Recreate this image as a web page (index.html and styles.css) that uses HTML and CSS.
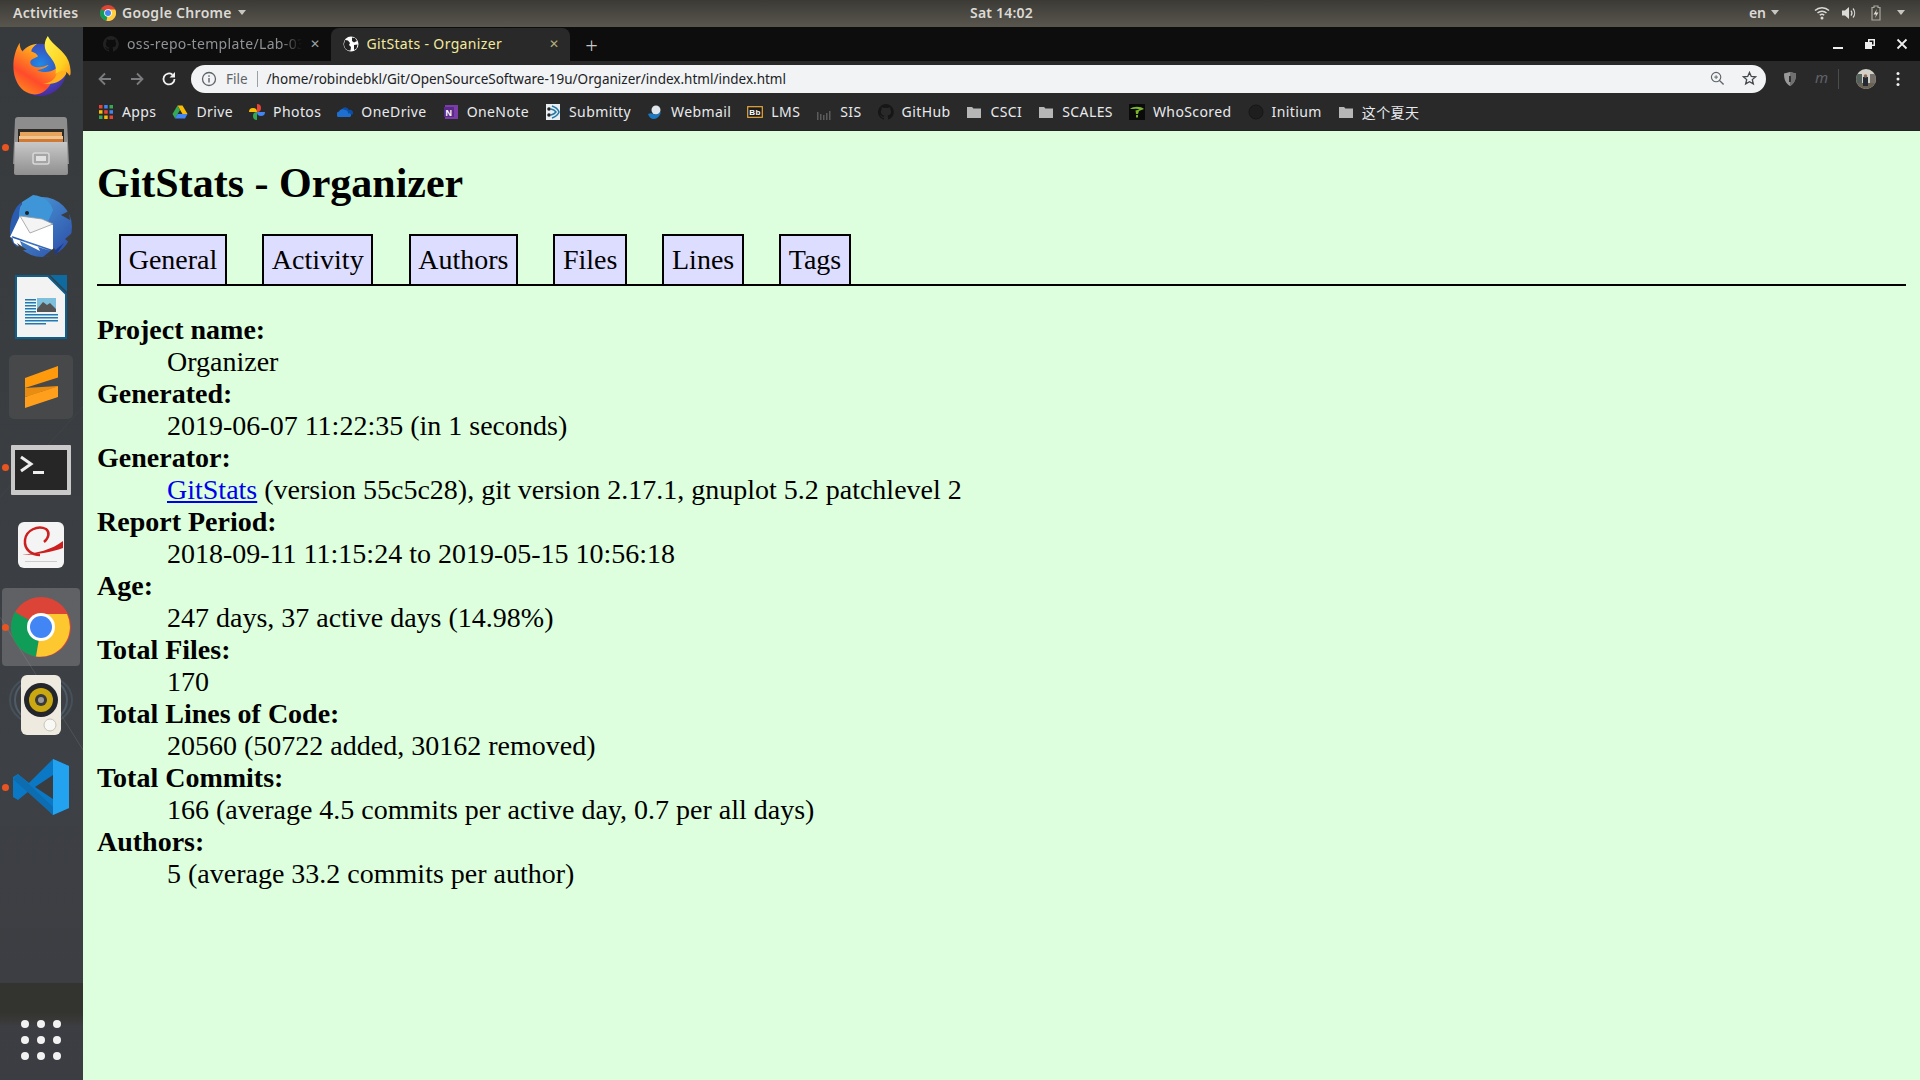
FILE: index.html
```html
<!DOCTYPE html>
<html lang="en">
<head>
<meta charset="utf-8">
<title>GitStats - Organizer</title>
<link rel="stylesheet" href="styles.css">
</head>
<body>
<header class="topbar">
  <div class="top-left">
    <span class="activities">Activities</span>
    <svg class="top-chrome" viewBox="0 0 16 16"><circle cx="8" cy="8" r="8" fill="#db4437"/><path d="M8 8 1.1 4 0 8a8 8 0 0 0 6.5 7.9z" fill="#0f9d58"/><path d="M8 4.5h7.2A8 8 0 0 1 6.5 15.9L8 8z" fill="#ffcd40"/><circle cx="8" cy="8" r="3.8" fill="#fff"/><circle cx="8" cy="8" r="3" fill="#4285f4"/></svg>
    <span class="appname">Google Chrome</span>
    <span class="caret"></span>
  </div>
  <div class="clock">Sat 14:02</div>
  <div class="top-right">
    <span class="lang">en</span>
    <span class="caret"></span>
    <svg class="tray tray-wifi" viewBox="0 0 16 16"><path d="M1 5.5a10 10 0 0 1 14 0M3.5 8a6.5 6.5 0 0 1 9 0M5.8 10.3a3.2 3.2 0 0 1 4.4 0" fill="none" stroke="#dcdad5" stroke-width="1.5"/><circle cx="8" cy="13" r="1.5" fill="#dcdad5"/></svg>
    <svg class="tray tray-vol" viewBox="0 0 16 16"><path d="M1 5.5h3L8 2v12l-4-3.500H1z" fill="#dcdad5"/><path d="M10 5.500a4 4 0 0 1 0 5M12 3.500a7 7 0 0 1 0 9" fill="none" stroke="#dcdad5" stroke-width="1.200"/></svg>
    <svg class="tray tray-bat" viewBox="0 0 16 16"><path d="M6 1h4v1.500h2V15H4V2.500h2z" fill="none" stroke="#aaa89f" stroke-width="1.200"/><path d="M9 4 5.500 9.500H8L7 13l3.500-5.500H8z" fill="#dcdad5"/></svg>
    <span class="caret"></span>
  </div>
</header>

<div class="desktop">
  <nav class="dock">
    <svg class="dock-wall" viewBox="0 0 83 1053"><path d="M0 590 83 723" stroke="#fff" stroke-opacity=".1" fill="none"/><path d="M0 470 83 380" stroke="#fff" stroke-opacity=".03" fill="none"/></svg>
    <div class="dock-band"></div>
    <div class="dock-item">
      <svg class="ic-fox" viewBox="0 0 64 64">
        <defs>
          <linearGradient id="fx1" x1="0.8" y1="0" x2="0.2" y2="1"><stop offset="0" stop-color="#ffe226"/><stop offset=".35" stop-color="#ff9a1f"/><stop offset=".7" stop-color="#ff4b2b"/><stop offset="1" stop-color="#ff8a1c"/></linearGradient>
          <radialGradient id="fx2" cx=".5" cy=".4" r=".6"><stop offset="0" stop-color="#1e8be8"/><stop offset="1" stop-color="#4b2aa0"/></radialGradient>
          <linearGradient id="fx3" x1="0" y1="0" x2="1" y2="1"><stop offset="0" stop-color="#fff44f"/><stop offset=".7" stop-color="#ffd020"/><stop offset="1" stop-color="#ff9a1f"/></linearGradient>
        </defs>
        <circle cx="31" cy="36" r="27" fill="url(#fx2)"/>
        <path d="M10 8c0 4 1 7 3 9 3-4 8-7 15-8-4 3-6 5-6 8 4 1 6 3 7 5-3 2-8 3-8 6 0 4 6 6 11 5 3 0 6-2 8-2-3 3-8 5-12 5 5 3 13 3 19-1 5-4 7-8 8-8 0 8-4 18-13 23C33 68 12 63 6 46 1 33 4 18 10 8z" fill="url(#fx1)"/>
        <path d="M39 1c-4 6-4 12-1 17 5 7 11 12 9 22 4-2 10-4 13 0 4 7 3-8 0-14-4-10-16-15-21-25z" fill="url(#fx3)"/>
        <path d="M48 40c-1 6-7 10-14 10 10 2 20-2 24-10 1-4-6-4-10 0z" fill="#ffb21e"/>
      </svg>
    </div>
    <div class="dock-item">
      <i class="run-dot"></i>
      <svg class="ic-files" viewBox="0 0 56 58">
        <defs><linearGradient id="fl1" x1="0" y1="0" x2="0" y2="1"><stop offset="0" stop-color="#c8c8c8"/><stop offset="1" stop-color="#8f8f8f"/></linearGradient></defs>
        <path d="M2 3q0-3 3-3h46q3 0 3 3l2 44H0z" fill="#8d8d8d"/>
        <rect x="5" y="12" width="46" height="14" fill="#2e2a26"/>
        <rect x="7" y="15" width="42" height="4" fill="#e8a35c"/>
        <rect x="6" y="19" width="44" height="3" fill="#f2c48e"/>
        <rect x="6" y="22" width="44" height="4" fill="#d07a35"/>
        <path d="M2 25h52l1 31q0 2-2 2H3q-2 0-2-2z" fill="url(#fl1)"/>
        <rect x="20" y="36" width="16" height="11" rx="2" fill="#a5a5a5" stroke="#d8d8d8" stroke-width="1.500"/>
        <rect x="23" y="39" width="10" height="5" fill="#e0e0e0"/>
      </svg>
    </div>
    <div class="dock-item">
      <svg class="ic-bird" viewBox="0 0 64 64">
        <defs><linearGradient id="tb1" x1="0" y1="0" x2="1" y2="1"><stop offset="0" stop-color="#4fa6e0"/><stop offset="1" stop-color="#2c4aa4"/></linearGradient></defs>
        <circle cx="33" cy="32" r="30" fill="url(#tb1)"/>
        <path d="M1 40C0 24 6 11 13 7c-5 12-4 24 4 36L8 52C4 49 2 45 1 40z" fill="#2a5cb0"/>
        <path d="M11 22 13 7 24 0c10 1 17 6 20 15l-6 14-19-4z" fill="#3e96d8"/>
        <path d="M11 21 44 30v25L3 41l2 7 9 6-3-8 20 10-2-4 13 4-41-14z" fill="#fff"/>
        <path d="M11 21 21 38 44 29 33 24z" fill="#f4f4f4" stroke="#9a9a9a" stroke-width=".8"/>
        <circle cx="18" cy="18" r="2" fill="#222"/>
        <path d="M8 48 18 55 12 55zM34 62 45 53l5 8zM56 44 63 38l-2 10zM52 20l8-4 1 9z" fill="#3a3d40"/>
        <path d="M45 56l10-8-8 12z" fill="#1e3c8c"/>
      </svg>
    </div>
    <div class="dock-item">
      <svg class="ic-writer" viewBox="0 0 52 64">
        <path d="M1 1h32l18 18v44H1z" fill="#f3f3f3" stroke="#0f5d8a" stroke-width="2"/>
        <path d="M35 0h17v17z" fill="#0f6aa0"/>
        <g fill="#1f7ab4"><rect x="10" y="24" width="11" height="1.500"/><rect x="10" y="27" width="11" height="1.500"/><rect x="10" y="30" width="11" height="1.500"/><rect x="10" y="33" width="11" height="1.500"/><rect x="10" y="36" width="11" height="1.500"/><rect x="10" y="39" width="33" height="1.500"/><rect x="10" y="42" width="33" height="1.500"/><rect x="10" y="45" width="33" height="1.500"/><rect x="10" y="48" width="21" height="1.500"/></g>
        <rect x="22" y="23" width="19" height="14" fill="#7ec0dc"/>
        <path d="M22 34l6-7 4 3 3-2 6 6v3H22z" fill="#555"/>
      </svg>
    </div>
    <div class="dock-item">
      <div class="tile-sublime">
        <svg class="ic-sublime" viewBox="0 0 33 42"><path d="M33 0v11.500L0 22V12z" fill="#ff9a0d"/><path d="M0 22l33 8.500L16 36 0 29z" fill="#cf7f14"/><path d="M33 20v11L0 42V31z" fill="#ff9f1c"/><path d="M0 22l33-2v.5L0 31z" fill="#e88c12"/></svg>
      </div>
    </div>
    <div class="dock-item">
      <i class="run-dot"></i>
      <svg class="ic-term" viewBox="0 0 60 50">
        <rect width="60" height="50" rx="1" fill="#c9c9c9"/>
        <rect x="4" y="5" width="52" height="40" fill="#262626"/>
        <path d="M10 12 20 19 10 26" fill="none" stroke="#eee" stroke-width="3"/>
        <rect x="22" y="26" width="11" height="3" fill="#eee"/>
      </svg>
    </div>
    <div class="dock-item">
      <svg class="ic-evince" viewBox="0 0 46 46">
        <rect width="46" height="46" rx="6" fill="#f4f4f4"/>
        <path d="M4 33C18 31 34 28 45 19v7C34 30 18 33 4 33z" fill="#cc1f1f"/>
        <path d="M22 33C14 33 6 28 7 18 8 8 20 3 28 7c4 3 3 9-2 13" fill="none" stroke="#cc1f1f" stroke-width="2.500"/>
        <rect x="7" y="39" width="32" height="1" fill="#ccc"/>
      </svg>
    </div>
    <div class="dock-item dock-active">
      <i class="run-dot"></i>
      <svg class="ic-chrome" viewBox="0 0 60 60">
        <circle cx="30" cy="30" r="30" fill="#db4437"/>
        <path d="M30 30 4 15A30 30 0 0 0 25 59.600z" fill="#0f9d58"/>
        <path d="M30 17h26A30 30 0 0 1 25 59.600L30 30z" fill="#fdc82f"/>
        <circle cx="30" cy="30" r="14" fill="#fff"/>
        <circle cx="30" cy="30" r="11" fill="#4285f4"/>
      </svg>
    </div>
    <div class="dock-item">
      <svg class="ic-rhythm" viewBox="0 0 64 60">
        <ellipse cx="32" cy="25" rx="31" ry="25" fill="none" stroke="#5d7a92" stroke-opacity=".3" stroke-width="2"/>
        <ellipse cx="32" cy="25" rx="26" ry="23" fill="none" stroke="#6f93b0" stroke-opacity=".35" stroke-width="2"/>
        <rect x="12" y="0" width="40" height="60" rx="6" fill="#eeeae0"/>
        <circle cx="32" cy="25" r="17" fill="#23262a"/>
        <circle cx="32" cy="25" r="12" fill="#c9a812"/>
        <circle cx="32" cy="25" r="6" fill="#3a3a3a"/>
        <circle cx="32" cy="25" r="3" fill="#9a9a9a"/>
        <circle cx="41" cy="50" r="6" fill="#f8f8f4" stroke="#c8c4b8"/>
      </svg>
    </div>
    <div class="dock-item">
      <i class="run-dot"></i>
      <svg class="ic-code" viewBox="0 0 56 56">
        <path d="M40 0 16 24 5 15 0 18v20l5 3 11-9 24 24 16-7V7z" fill="#0a78c4"/>
        <path d="M40 0l16 7v42l-16 7z" fill="#23a2f0"/>
        <path d="M40 16 22 28l18 12z" fill="#3a3d40"/>
        <path d="M5 15l35 33v8L0 20z" fill="#0e6cb0"/>
      </svg>
    </div>
    <div class="dock-grid">
      <i></i><i></i><i></i><i></i><i></i><i></i><i></i><i></i><i></i>
    </div>
  </nav>

  <div class="browser">
    <div class="tabstrip">
      <div class="tab">
        <svg class="bm-ic" viewBox="0 0 16 16"><path d="M8 0a8 8 0 0 0-2.500 15.600c.4 0 .5-.2.500-.4v-1.400c-2.200.5-2.700-1-2.700-1-.4-.9-.9-1.200-.9-1.200-.7-.5.100-.5.100-.5.800.1 1.200.8 1.200.8.700 1.200 1.900.9 2.300.7.100-.5.300-.9.500-1.100-1.800-.2-3.600-.9-3.600-4 0-.9.300-1.600.8-2.100-.1-.2-.4-1 .1-2.100 0 0 .7-.2 2.200.8a7.600 7.600 0 0 1 4 0c1.500-1 2.200-.8 2.200-.8.400 1.100.2 1.900.1 2.100.5.600.8 1.300.8 2.100 0 3.100-1.900 3.700-3.700 3.900.3.300.6.800.6 1.500v2.200c0 .2.100.5.600.4A8 8 0 0 0 8 0z" fill="#222"/></svg>
        <span class="tab-title tab-title-dim">oss-repo-template/Lab-03</span>
        <span class="tab-x">✕</span>
      </div>
      <div class="tab tab-on">
        <svg class="bm-ic" viewBox="0 0 16 16"><circle cx="8" cy="8" r="7.500" fill="#fff"/><path d="M2 4l3 .5 2 2.500-1 2 2 2-.5 3.500C4 15 1 12 1 8zM9 1.500l3 .5 2 3-3 1.500-2-1.500zM11 9l3.500-.5-1 4-2.500 1.500z" fill="#222"/></svg>
        <span class="tab-title">GitStats - Organizer</span>
        <span class="tab-x">✕</span>
      </div>
      <span class="newtab">+</span>
      <div class="winctl">
        <svg viewBox="0 0 12 12"><rect x="1" y="9" width="10" height="2" fill="#eee"/></svg>
        <svg viewBox="0 0 12 12"><path d="M4 1h7v7H8V11H1V4h3zM5.500 2.500v1.500H8v2.500h1.500v-4z" fill="#eee" fill-rule="evenodd"/></svg>
        <svg viewBox="0 0 12 12"><path d="M1.500 1.500l9 9M10.500 1.500l-9 9" stroke="#eee" stroke-width="1.800"/></svg>
      </div>
    </div>

    <div class="toolbar">
      <svg class="tb-ic" viewBox="0 0 16 16"><path d="M14 8H3M8 2.500 2.500 8 8 13.500" fill="none" stroke="#7b7c7e" stroke-width="1.800"/></svg>
      <svg class="tb-ic" viewBox="0 0 16 16"><path d="M2 8h11M8 2.500 13.500 8 8 13.500" fill="none" stroke="#7b7c7e" stroke-width="1.800"/></svg>
      <svg class="tb-ic" viewBox="0 0 16 16"><path d="M13.500 8A5.500 5.500 0 1 1 11.500 3.700" fill="none" stroke="#f1f1f1" stroke-width="1.800"/><path d="M14 1v5.500H8.500z" fill="#f1f1f1"/></svg>
      <div class="omnibox">
        <svg class="info" viewBox="0 0 16 16"><circle cx="8" cy="8" r="6.500" fill="none" stroke="#5f6368" stroke-width="1.300"/><rect x="7.300" y="7" width="1.400" height="4.500" fill="#5f6368"/><rect x="7.300" y="4.300" width="1.400" height="1.500" fill="#5f6368"/></svg>
        <span class="file">File</span>
        <span class="omni-sep"></span>
        <span class="url">/home/robindebkl/Git/OpenSourceSoftware-19u/Organizer/index.html/index.html</span>
        <svg class="omni-ic" viewBox="0 0 16 16"><circle cx="6.500" cy="6.500" r="5" fill="none" stroke="#5f6368" stroke-width="1.200"/><path d="M10 10l4.500 4.500" stroke="#5f6368" stroke-width="1.500"/><path d="M4.500 6.500h4M6.500 4.500v4" stroke="#5f6368"/></svg>
        <svg class="omni-ic" viewBox="0 0 16 16"><path d="M8 1.500l1.900 4.300 4.600.4-3.500 3 1.100 4.600L8 11.400l-4.100 2.400L5 9.200l-3.500-3 4.600-.4z" fill="none" stroke="#45484c" stroke-width="1.400"/></svg>
      </div>
      <svg class="ext-ic" viewBox="0 0 16 16"><path d="M8 1l6 1.500c0 6-1.500 10-6 12.500C3.500 12.500 2 8.500 2 2.500z" fill="#9a9a9a"/><path d="M8 1v14c4.500-2.500 6-6.500 6-12.500z" fill="#6f6f6f"/><rect x="7" y="5" width="2" height="6" fill="#333"/></svg>
      <span class="ext-m">m</span>
      <span class="tb-sep"></span>
      <svg class="avatar" viewBox="0 0 20 20"><defs><clipPath id="av"><circle cx="10" cy="10" r="10"/></clipPath></defs><g clip-path="url(#av)"><rect width="20" height="20" fill="#d4d2c8"/><rect y="14" width="20" height="6" fill="#6b6256"/><rect x="0" y="5" width="6" height="9" fill="#55605a"/><rect x="14" y="5" width="6" height="9" fill="#75706a"/><rect x="7" y="8" width="5" height="9" fill="#232a33"/><circle cx="9.500" cy="7" r="1.800" fill="#8a6a55"/></g></svg>
      <svg class="kebab" viewBox="0 0 4 16"><circle cx="2" cy="2.500" r="1.500" fill="#f1f1f1"/><circle cx="2" cy="8" r="1.500" fill="#f1f1f1"/><circle cx="2" cy="13.500" r="1.500" fill="#f1f1f1"/></svg>
    </div>

    <div class="bookmarks">
      <a class="bm">
        <svg class="bm-ic" viewBox="0 0 16 16"><g><rect x="1" y="1" width="3.500" height="3.500" fill="#ea4335"/><rect x="6.200" y="1" width="3.500" height="3.500" fill="#4285f4"/><rect x="11.500" y="1" width="3.500" height="3.500" fill="#34a853"/><rect x="1" y="6.200" width="3.500" height="3.500" fill="#fbbc05"/><rect x="6.200" y="6.200" width="3.500" height="3.500" fill="#ea4335"/><rect x="11.500" y="6.200" width="3.500" height="3.500" fill="#4285f4"/><rect x="1" y="11.500" width="3.500" height="3.500" fill="#34a853"/><rect x="6.200" y="11.500" width="3.500" height="3.500" fill="#fbbc05"/><rect x="11.500" y="11.500" width="3.500" height="3.500" fill="#ea4335"/></g></svg>
        <span>Apps</span>
      </a>
      <a class="bm">
        <svg class="bm-ic" viewBox="0 0 16 16"><path d="M5.500 1.500h5L15.500 10h-5z" fill="#fbbc05"/><path d="M5.500 1.500 .5 10l2.500 4.500L8 6z" fill="#34a853"/><path d="M3 14.500h10l2.500-4.500h-10z" fill="#4285f4"/></svg>
        <span>Drive</span>
      </a>
      <a class="bm">
        <svg class="bm-ic" viewBox="0 0 16 16"><path d="M8 8V0a4 4 0 0 1 0 8z" fill="#ea4335"/><path d="M8 8h8a4 4 0 0 1-8 0z" fill="#4285f4"/><path d="M8 8v8a4 4 0 0 1 0-8z" fill="#34a853"/><path d="M8 8H0a4 4 0 0 1 8 0z" fill="#fbbc05"/></svg>
        <span>Photos</span>
      </a>
      <a class="bm">
        <svg class="bm-ic" viewBox="0 0 16 16"><path d="M5 5a4 4 0 0 1 7 1 3 3 0 0 1 3.500 4.500H8z" fill="#0a4ea8"/><path d="M1 13a3 3 0 0 1 1-5.500 4 4 0 0 1 6-1.500 3 3 0 0 1 3 3.500 2 2 0 0 1 2 3.500z" fill="#1f6fd0"/></svg>
        <span>OneDrive</span>
      </a>
      <a class="bm">
        <svg class="bm-ic" viewBox="0 0 16 16"><rect x="2" y="1" width="13" height="14" fill="#7b3ea8"/><rect x="1" y="3" width="10" height="10" fill="#5a2a88"/><text class="bm-n" x="6" y="11.500">N</text></svg>
        <span>OneNote</span>
      </a>
      <a class="bm">
        <svg class="bm-ic" viewBox="0 0 16 16"><rect x="1" y="0" width="14" height="16" fill="#e8eef2"/><path d="M7 2c3 1 6 3 7 6-1 3-4 5-7 6M6 5c2 .5 4 1.500 5 3-1 1.500-3 2.500-5 3" fill="none" stroke="#2478a8" stroke-width="1.500"/><circle cx="4" cy="5" r="1.800" fill="#222"/><circle cx="4" cy="11" r="1.800" fill="#222"/></svg>
        <span>Submitty</span>
      </a>
      <a class="bm">
        <svg class="bm-ic" viewBox="0 0 16 16"><circle cx="9" cy="6" r="4.500" fill="#dfe6ec"/><path d="M1 10c3-2 6 0 8 1l5-3c-1 4-4 7-7 7-3 0-5-2-6-5z" fill="#1a78c2"/></svg>
        <span>Webmail</span>
      </a>
      <a class="bm">
        <svg class="bm-ic" viewBox="0 0 16 16"><rect x=".7" y="2.700" width="14.600" height="10.600" fill="#1c1c1c" stroke="#e8a93a" stroke-width="1.200"/><text class="bm-bb" x="8" y="11">Bb</text></svg>
        <span>LMS</span>
      </a>
      <a class="bm">
        <svg class="bm-ic" viewBox="0 0 16 16"><path d="M1 8h1.500v8H1zM4 10h1.500v6H4zM7 11h1.500v5H7zM10 9h1.500v7H10zM13 7h1.500v9H13z" fill="#5c5c5c"/></svg>
        <span>SIS</span>
      </a>
      <a class="bm">
        <svg class="bm-ic" viewBox="0 0 16 16"><path d="M8 0a8 8 0 0 0-2.500 15.600c.4 0 .5-.2.500-.4v-1.400c-2.200.5-2.700-1-2.700-1-.4-.9-.9-1.200-.9-1.200-.7-.5.100-.5.100-.5.800.1 1.200.8 1.200.8.700 1.200 1.900.9 2.300.7.100-.5.300-.9.500-1.100-1.800-.2-3.600-.9-3.600-4 0-.9.300-1.600.8-2.100-.1-.2-.4-1 .1-2.100 0 0 .7-.2 2.200.8a7.600 7.600 0 0 1 4 0c1.500-1 2.200-.8 2.200-.8.400 1.100.2 1.900.1 2.100.5.600.8 1.300.8 2.100 0 3.100-1.900 3.700-3.700 3.900.3.300.6.800.6 1.500v2.200c0 .2.100.5.600.4A8 8 0 0 0 8 0z" fill="#161616"/></svg>
        <span>GitHub</span>
      </a>
      <a class="bm">
        <svg class="bm-ic" viewBox="0 0 16 16"><path d="M1 3h5l1.500 1.500H15V14H1z" fill="#b6b6b6"/></svg>
        <span>CSCI</span>
      </a>
      <a class="bm">
        <svg class="bm-ic" viewBox="0 0 16 16"><path d="M1 3h5l1.500 1.500H15V14H1z" fill="#b6b6b6"/></svg>
        <span>SCALES</span>
      </a>
      <a class="bm">
        <svg class="bm-ic" viewBox="0 0 16 16"><rect width="16" height="16" fill="#0a0a0a"/><path d="M1 5c3-3 11-3 14 0l-5 2-1 3H7l-.5-3.500 4-1C8 4 5 5 1 5z" fill="#7ab52c"/><rect x="7" y="11" width="2" height="2.500" fill="#7ab52c"/></svg>
        <span>WhoScored</span>
      </a>
      <a class="bm">
        <svg class="bm-ic" viewBox="0 0 16 16"><circle cx="8" cy="8" r="7" fill="#1e1e1e" stroke="#161616"/></svg>
        <span>Initium</span>
      </a>
      <a class="bm">
        <svg class="bm-ic" viewBox="0 0 16 16"><path d="M1 3h5l1.500 1.500H15V14H1z" fill="#b6b6b6"/></svg>
        <span>这个夏天</span>
      </a>
    </div>

    <main class="page">
      <h1 class="title">GitStats - Organizer</h1>
      <ul class="nav">
        <li><a class="nav-link">General</a></li>
        <li><a class="nav-link">Activity</a></li>
        <li><a class="nav-link">Authors</a></li>
        <li><a class="nav-link">Files</a></li>
        <li><a class="nav-link">Lines</a></li>
        <li><a class="nav-link">Tags</a></li>
      </ul>
      <dl class="stats">
        <dt>Project name:</dt><dd>Organizer</dd>
        <dt>Generated:</dt><dd>2019-06-07 11:22:35 (in 1 seconds)</dd>
        <dt>Generator:</dt><dd><a class="ext-link" href="#">GitStats</a> (version 55c5c28), git version 2.17.1, gnuplot 5.2 patchlevel 2</dd>
        <dt>Report Period:</dt><dd>2018-09-11 11:15:24 to 2019-05-15 10:56:18</dd>
        <dt>Age:</dt><dd>247 days, 37 active days (14.98%)</dd>
        <dt>Total Files:</dt><dd>170</dd>
        <dt>Total Lines of Code:</dt><dd>20560 (50722 added, 30162 removed)</dd>
        <dt>Total Commits:</dt><dd>166 (average 4.5 commits per active day, 0.7 per all days)</dd>
        <dt>Authors:</dt><dd>5 (average 33.2 commits per author)</dd>
      </dl>
    </main>
  </div>
</div>
</body>
</html>
```

FILE: styles.css
```css
* { box-sizing: border-box; }
html, body { margin: 0; height: 100%; overflow: hidden; }
body { display: flex; flex-direction: column; width: 1920px; height: 1080px; font-family: "Noto Sans", "Noto Sans CJK SC", sans-serif; }

.topbar {
  flex: 0 0 27px; display: grid; grid-template-columns: 970px auto 1fr; align-items: center; padding-bottom: 2px;
  background: linear-gradient(#3b3a35, #59564e); color: #dcdad5; font-size: 14px; font-weight: 600;
}
.top-left { display: flex; align-items: center; padding-left: 13px; }
.activities { width: 87px; letter-spacing: .3px; }
.top-chrome { width: 16px; height: 16px; margin-right: 6px; }
.appname { width: 116px; letter-spacing: .3px; white-space: nowrap; }
.caret { width: 0; height: 0; border: 4.500px solid transparent; border-top: 5px solid #c8c6c0; border-bottom: 0; }
.clock { letter-spacing: .2px; }
.top-right { display: flex; align-items: center; justify-content: flex-end; padding-right: 15px; }
.lang { margin-right: 5px; font-size: 14px; }
.tray { width: 16px; height: 16px; }
.tray-wifi { margin-left: 34.500px; }
.tray-vol { margin-left: 11px; }
.tray-bat { margin-left: 11.500px; margin-right: 13px; }

.desktop { flex: 1; display: flex; min-height: 0; }

.dock {
  flex: 0 0 83px; display: flex; flex-direction: column; position: relative; padding-right: 1px;
  background: linear-gradient(#373a3d, #3d4044 70%, #3c3d42);
}
.dock-wall { position: absolute; left: 0; top: 0; width: 83px; height: 1053px; }
.dock-item { flex: 0 0 80px; display: flex; align-items: center; justify-content: center; position: relative; }
.dock-active::before { content: ""; position: absolute; left: 2px; top: 1px; width: 78px; height: 78px; border-radius: 4px; background: rgba(255,255,255,.18); }
.dock-active svg { position: relative; }
.run-dot { position: absolute; z-index: 1; left: 2px; top: 37px; width: 7px; height: 7px; border-radius: 50%; background: #e95420; }
.ic-fox { width: 62px; height: 62px; margin-bottom: 2px; }
.ic-files { width: 56px; height: 58px; margin-bottom: 2px; }
.ic-bird { width: 64px; height: 64px; }
.ic-writer { width: 52px; height: 64px; }
.tile-sublime { width: 64px; height: 64px; border-radius: 5px; background: #47484a; display: flex; align-items: center; justify-content: center; }
.ic-sublime { width: 33px; height: 42px; }
.ic-term { width: 60px; height: 50px; margin-top: 5px; }
.ic-evince { width: 46px; height: 46px; margin-bottom: 4px; }
.ic-chrome { width: 60px; height: 60px; }
.ic-rhythm { width: 64px; height: 60px; margin-bottom: 4px; }
.ic-code { width: 56px; height: 56px; }
.dock-band { position: absolute; left: 0; right: 0; top: 956px; height: 42px; background: linear-gradient(#33332f 70%, #3c3c3e); }
.dock-grid {
  position: absolute; left: 21px; top: 993px; display: grid; grid-template-columns: repeat(3, 8px); grid-auto-rows: 8px; gap: 8px;
}
.dock-grid i { border-radius: 50%; background: #f2f2f2; }

.browser { flex: 1; min-width: 0; display: flex; flex-direction: column; }

.tabstrip { flex: 0 0 34px; display: flex; align-items: flex-end; background: #0d0d0d; padding-left: 14px; }
.tab { flex: 0 0 233.500px; min-width: 0; height: 33px; display: flex; align-items: center; padding: 0 8.500px 2px 6px; font-size: 14px; letter-spacing: .35px; color: #9aa0a6; }
.tab-on { flex-basis: 239px; background: #292929; border-radius: 8px 8px 0 0; color: #f4ea9c; padding: 0 8px 2px 12px; }
.tab .bm-ic { margin-right: 8px; }
.tab-title { flex: 1; min-width: 0; white-space: nowrap; overflow: hidden; }
.tab-title-dim { color: #8f9396; margin-right: 6px; -webkit-mask-image: linear-gradient(90deg, #000 88%, transparent); mask-image: linear-gradient(90deg, #000 88%, transparent); }
.tab-x { font-size: 12px; color: #9aa0a6; width: 14px; text-align: center; }
.tab-on .tab-x { color: #b5ad7c; }
.newtab { width: 44px; height: 33px; display: flex; align-items: center; justify-content: center; font-size: 22px; font-weight: 300; color: #c8c8c8; }
.winctl { margin-left: auto; height: 33px; display: flex; align-items: center; gap: 20px; padding: 0 12px 2px 0; }
.winctl svg { width: 12px; height: 12px; }

.toolbar { flex: 0 0 35px; display: flex; align-items: center; background: #292929; padding-left: 14px; }
.tb-ic { width: 16px; height: 16px; margin-right: 16px; }
.omnibox {
  flex: 0 0 1575px; height: 28px; margin-left: -2px; border-radius: 14px; background: #f1f3f4; display: flex; align-items: center;
  padding: 0 9px 0 10px; font-size: 13.500px; color: #202124;
}
.info { width: 16px; height: 16px; }
.file { margin-left: 9px; color: #5f6368; }
.omni-sep { width: 1px; height: 16px; background: #9aa0a6; margin: 0 9px; }
.url { flex: 1; white-space: nowrap; }
.omni-ic { width: 15px; height: 15px; margin-left: 17px; }
.ext-ic { width: 16px; height: 16px; margin-left: 15.500px; }
.ext-m { margin-left: 17.500px; width: 14px; font-size: 15px; font-style: italic; color: #5f6368; margin-top: -3px; }
.tb-sep { width: 1px; height: 20px; background: #4c4c4c; margin: 0 13px 0 9px; }
.avatar { width: 20px; height: 20px; margin-left: 4px; }
.kebab { width: 4px; height: 16px; margin-left: 20px; }

.bookmarks { flex: 0 0 35px; display: flex; align-items: center; gap: 16px; background: #292929; padding: 0 0 3px 15px; border-bottom: 1px solid #222; font-size: 14px; color: #e8eaed; letter-spacing: .4px; }
.bm { display: flex; align-items: center; gap: 8px; white-space: nowrap; }
.bm-ic { width: 16px; height: 16px; flex: none; }
.bm-n { font-family: "Liberation Sans", sans-serif; font-size: 9px; font-weight: 700; fill: #fff; text-anchor: middle; }
.bm-bb { font-family: "Liberation Sans", sans-serif; font-size: 8px; font-weight: 700; fill: #fff; text-anchor: middle; }

.page { flex: 1; background: #dfd; padding: 28px 14px 0; color: #000; font-family: "Liberation Serif", serif; font-size: 28px; line-height: 32px; min-height: 0; }
.title { margin: 0 0 27px; font-size: 42px; line-height: 48px; font-weight: 700; }
.nav { list-style: none; margin: 0 0 28px; padding: 0 0 0 22px; display: flex; gap: 35.200px; border-bottom: 2px solid #000; }
.nav-link { display: block; padding: 8px 7.700px; background: #ddf; border: 2px solid #000; border-bottom-width: 0; height: 50px; }
.stats { margin: 0; }
.stats dt { font-weight: 700; }
.stats dd { margin: 0 0 0 70px; }
.ext-link { color: #00e; text-decoration: underline; }
```
